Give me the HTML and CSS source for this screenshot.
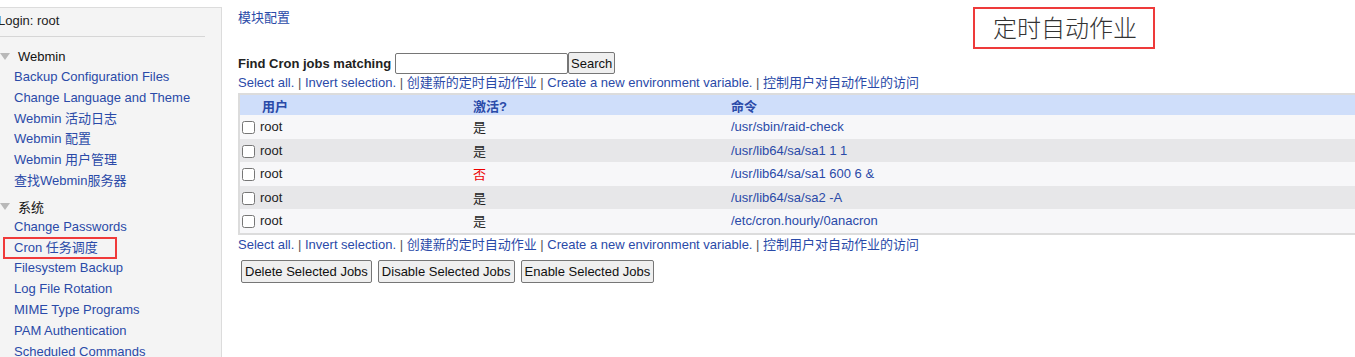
FILE: index.html
```html
<!DOCTYPE html>
<html>
<head>
    <title>定时自动作业</title>
    <link rel="stylesheet" href="styles.css">
</head>
<body>
    <div class="layout">
        <!-- Left menu -->
        <div class="sidebar">
            <div class="login">Login: root</div>
            <div class="group">
                <div class="group-title"><span class="arrow"></span>Webmin</div>
                <a href="#">Backup Configuration Files</a>
                <a href="#">Change Language and Theme</a>
                <a href="#">Webmin 活动日志</a>
                <a href="#">Webmin 配置</a>
                <a href="#">Webmin 用户管理</a>
                <a href="#">查找Webmin服务器</a>
            </div>
            <div class="group">
                <div class="group-title"><span class="arrow"></span>系统</div>
                <a href="#">Change Passwords</a>
                <a href="#" class="marked">Cron 任务调度</a>
                <a href="#">Filesystem Backup</a>
                <a href="#">Log File Rotation</a>
                <a href="#">MIME Type Programs</a>
                <a href="#">PAM Authentication</a>
                <a href="#">Scheduled Commands</a>
            </div>
        </div>

        <!-- Module page -->
        <div class="main">
            <div class="top">
                <a href="#" class="config">模块配置</a>
                <div class="title">定时自动作业</div>
            </div>

            <form class="search">
                <b>Find Cron jobs matching</b>
                <input type="text" class="search-box"><button type="button" class="btn">Search</button>
            </form>

            <div class="links">
                <a href="#">Select all.</a> | <a href="#">Invert selection.</a> | <a href="#">创建新的定时自动作业</a> | <a href="#">Create a new environment variable.</a> | <a href="#">控制用户对自动作业的访问</a>
            </div>

            <table class="jobs">
                <tr>
                    <th class="cb"></th>
                    <th class="user">用户</th>
                    <th class="active">激活?</th>
                    <th>命令</th>
                </tr>
                <tr>
                    <td class="cb"><input type="checkbox"></td>
                    <td>root</td>
                    <td>是</td>
                    <td><a href="#">/usr/sbin/raid-check</a></td>
                </tr>
                <tr>
                    <td class="cb"><input type="checkbox"></td>
                    <td>root</td>
                    <td>是</td>
                    <td><a href="#">/usr/lib64/sa/sa1 1 1</a></td>
                </tr>
                <tr>
                    <td class="cb"><input type="checkbox"></td>
                    <td>root</td>
                    <td class="no">否</td>
                    <td><a href="#">/usr/lib64/sa/sa1 600 6 &amp;</a></td>
                </tr>
                <tr>
                    <td class="cb"><input type="checkbox"></td>
                    <td>root</td>
                    <td>是</td>
                    <td><a href="#">/usr/lib64/sa/sa2 -A</a></td>
                </tr>
                <tr>
                    <td class="cb"><input type="checkbox"></td>
                    <td>root</td>
                    <td>是</td>
                    <td><a href="#">/etc/cron.hourly/0anacron</a></td>
                </tr>
            </table>

            <div class="links">
                <a href="#">Select all.</a> | <a href="#">Invert selection.</a> | <a href="#">创建新的定时自动作业</a> | <a href="#">Create a new environment variable.</a> | <a href="#">控制用户对自动作业的访问</a>
            </div>

            <div class="actions">
                <button type="button" class="btn">Delete Selected Jobs</button>
                <button type="button" class="btn">Disable Selected Jobs</button>
                <button type="button" class="btn">Enable Selected Jobs</button>
            </div>
        </div>
    </div>
</body>
</html>
```

FILE: styles.css
```css
body {
    margin: 0;
    font-family: "Liberation Sans", Arial, "Noto Sans CJK SC", sans-serif;
    font-size: 13px;
    color: #222;
    background: #fff;
    overflow: hidden;
    height: 357px;
}
a {
    color: #2a4aa8;
    text-decoration: none;
}
.layout {
    display: flex;
    align-items: flex-start;
}
.sidebar {
    width: 223px;
    margin-left: -5px;
    margin-top: 7px;
    height: 349px;
    overflow: hidden;
    padding-left: 3px;
    background-color: #f4f4f4;
    border: 1px solid #dcdcdc;
    border-left: none;
    border-bottom: none;
}
.login {
    padding: 5px 0 8px;
    margin-right: 16px;
    border-bottom: 1px solid #d6d6d6;
    font-size: 13px;
}
.group {
    display: flex;
    flex-direction: column;
    padding-top: 9px;
}
.group + .group {
    padding-top: 4px;
}
.group-title {
    display: flex;
    align-items: center;
    height: 21px;
    color: #111;
}
.arrow {
    width: 0;
    height: 0;
    margin: 0 8px 0 2px;
    border-left: 5px solid transparent;
    border-right: 5px solid transparent;
    border-top: 7px solid #b8b8b8;
}
.group a {
    display: block;
    align-self: flex-start;
    line-height: 20.8px;
    padding-left: 16px;
}
.group a.marked {
    margin-left: 7px;
    padding: 0 17px 0 9px;
    line-height: 18.8px;
    margin-top: 1px;
    margin-bottom: 1px;
    outline: 2px solid #f03a3a;
}
.main {
    flex: 1;
    padding-left: 16px;
}
.top {
    display: flex;
    align-items: flex-start;
    height: 50px;
    padding-top: 9px;
    box-sizing: border-box;
}
.config {
    line-height: 18px;
}
.title {
    margin-left: 683px;
    margin-top: -2px;
    padding: 2px 16px 4px 18px;
    border: 2px solid #ee3a3a;
    font-size: 24px;
    color: #333;
    font-family: "Noto Sans CJK SC", sans-serif;
    font-weight: 300;
    line-height: 32px;
}
.search {
    display: flex;
    align-items: center;
    margin: 2px 0 0;
}
.search b {
    margin-right: 4px;
}
.search-box {
    width: 173px;
    height: 21px;
    box-sizing: border-box;
    border: 1px solid #767676;
    border-radius: 2px;
    margin: 0;
}
.btn {
    font-family: "Liberation Sans", Arial, sans-serif;
    font-size: 13px;
    height: 22px;
    padding: 0 2px;
    color: #111;
    background-color: #efefef;
    border: 1px solid #767676;
    border-radius: 2px;
}
.links {
    line-height: 20px;
    color: #555;
}
.search + .links {
    margin-top: -1px;
}
.jobs {
    width: 100%;
    border-collapse: collapse;
    border: 2px solid #dcdcdc;
    border-right: none;
}
.jobs th {
    background-color: #cfdefa;
    color: #2a4aa8;
    text-align: left;
    height: 20px;
    padding: 0;
}
.jobs th.user {
    padding-left: 2px;
}
.jobs td {
    height: 23.5px;
    padding: 0;
}
.jobs tr:nth-child(even) td {
    background-color: #f7f7f9;
}
.jobs tr:nth-child(odd) td {
    background-color: #e7e7e9;
}
.jobs .cb {
    width: 20px;
}
.jobs .cb input {
    margin: 0 0 0 2px;
    width: 13px;
    height: 13px;
    vertical-align: middle;
}
.jobs .user {
    width: 211px;
}
.jobs .active {
    width: 258px;
}
.jobs td.no {
    color: #ee0000;
}
.actions {
    display: flex;
    gap: 6px;
    margin-top: 5px;
    padding-left: 3px;
}
.actions .btn {
    height: 23px;
    padding: 0 3px;
}
```
